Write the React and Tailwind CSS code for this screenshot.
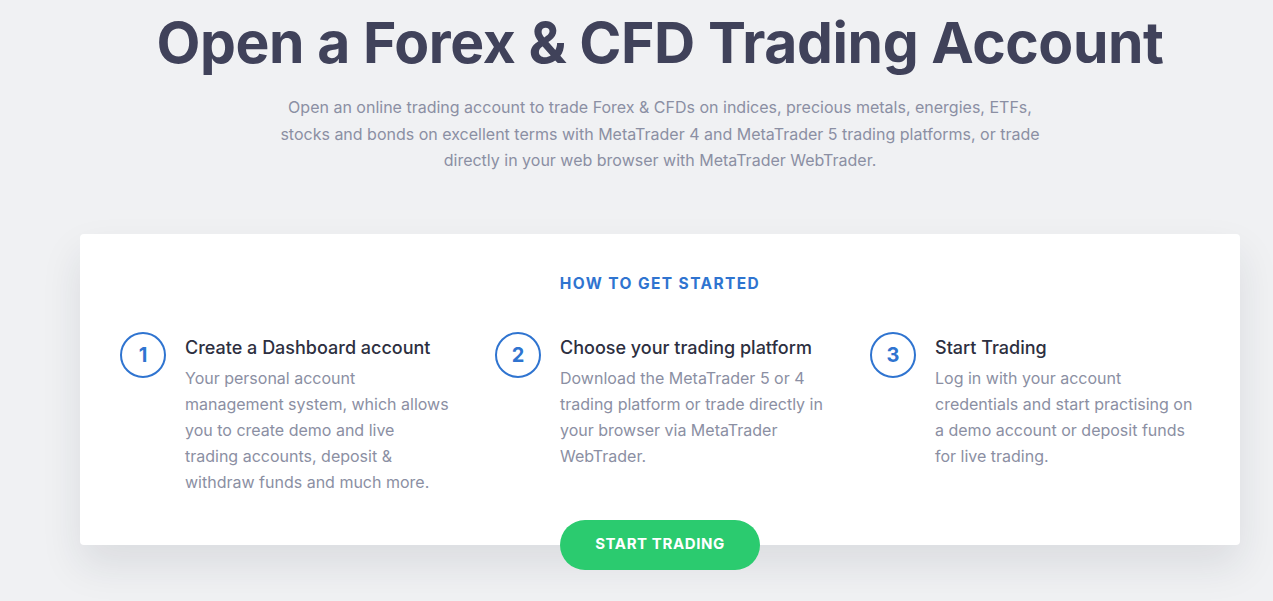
const steps = [
  {
    n: '1',
    title: 'Create a Dashboard account',
    text: 'Your personal account management system, which allows you to create demo and live trading accounts, deposit & withdraw funds and much more.',
  },
  {
    n: '2',
    title: 'Choose your trading platform',
    text: 'Download the MetaTrader 5 or 4 trading platform or trade directly in your browser via MetaTrader WebTrader.',
  },
  {
    n: '3',
    title: 'Start Trading',
    text: 'Log in with your account credentials and start practising on a demo account or deposit funds for live trading.',
  },
]

export default function App() {
  return (
    <div className="min-h-[601px] bg-[#f0f1f3] font-['Inter',sans-serif] overflow-hidden">
      <div className="w-[1320px]">
        {/* Hero */}
        <div className="pt-[7px] text-center">
          <h1 className="text-[57px] leading-[72px] font-bold text-[#40425a] tracking-[-0.42px]">
            Open a Forex &amp; CFD Trading Account
          </h1>
          <p className="mx-auto mt-[15px] max-w-[780px] text-[16px] leading-[26.5px] text-[#8b8fa3]">
            Open an online trading account to trade Forex &amp; CFDs on indices, precious metals, energies, ETFs,
            stocks and bonds on excellent terms with MetaTrader 4 and MetaTrader 5 trading platforms, or trade
            directly in your web browser with MetaTrader WebTrader.
          </p>
        </div>

        {/* Card */}
        <div className="ml-[80px] w-[1160px] mt-[60px] mb-[40px] bg-white rounded-[4px] shadow-[0_20px_40px_rgba(30,35,60,0.10)] flex flex-col items-center px-[40px]">
          <h2 className="mt-[40px] text-[15.5px] leading-[20px] font-bold tracking-[1.4px] text-[#2f74d0]">
            HOW TO GET STARTED
          </h2>

          <div className="mt-[38px] w-full grid grid-cols-3 gap-[45px]">
            {steps.map((s) => (
              <div key={s.n} className="flex gap-[19px]">
                <div className="shrink-0 w-[46px] h-[46px] rounded-full border-2 border-[#2f74d0] flex items-center justify-center text-[20px] font-bold text-[#2f74d0]">
                  {s.n}
                </div>
                <div className="pt-[4px] max-w-[270px]">
                  <h3 className="text-[18px] leading-[24px] font-medium text-[#2d2f3f]">{s.title}</h3>
                  <p className="mt-[5px] text-[16px] leading-[26px] text-[#8b8fa3]">{s.text}</p>
                </div>
              </div>
            ))}
          </div>

          <button className="mt-[25px] -mb-[25px] w-[200px] h-[50px] rounded-full bg-[#2bcb6f] text-white text-[15px] font-bold tracking-[0.6px]">
            START TRADING
          </button>
        </div>
      </div>
    </div>
  )
}
